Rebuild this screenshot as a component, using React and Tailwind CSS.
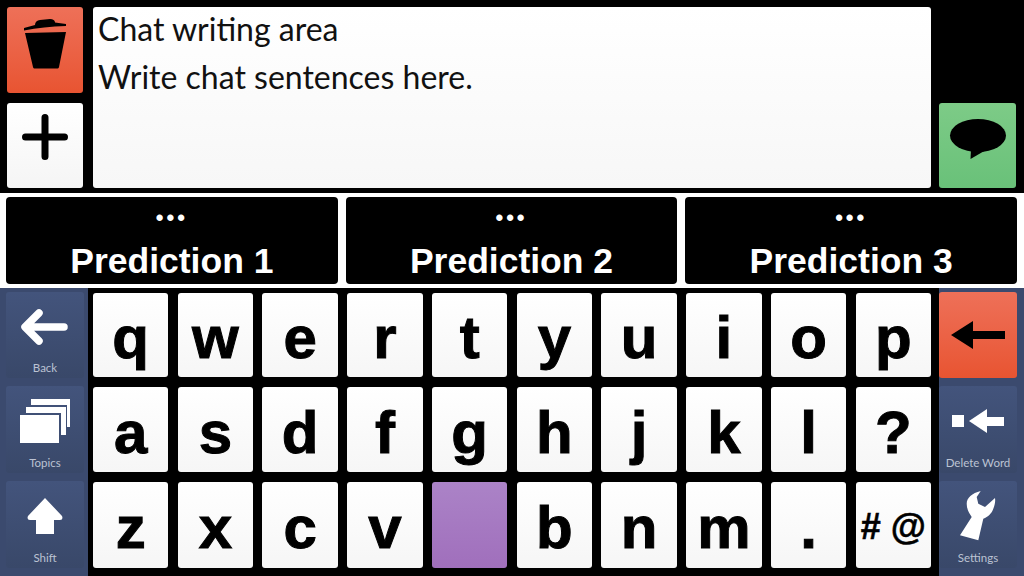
import React from 'react'

const ROWS = [
  ['q', 'w', 'e', 'r', 't', 'y', 'u', 'i', 'o', 'p'],
  ['a', 's', 'd', 'f', 'g', 'h', 'j', 'k', 'l', '?'],
  ['z', 'x', 'c', 'v', '', 'b', 'n', 'm', '.', '#@'],
]

const ROUND_TEXT = 'font-["Liberation_Sans",Arial,sans-serif]'

function TrashIcon() {
  return (
    <svg width="44" height="51" viewBox="0 0 44 51">
      <path d="M1 10 L12 7 C12 4 14 2.5 17 2 L27 1 C30 1 32 2.5 32 4.5 L43 6 L43 8 C28 8.5 14 10 1 12.5 Z" fill="#000" />
      <path d="M2 15 L43 14 L36 49 C35.8 50 35 50.5 34 50.5 L12 50.5 C11 50.5 10.2 50 10 49 Z" fill="#000" />
    </svg>
  )
}

function PlusIcon() {
  return (
    <svg width="46" height="46" viewBox="0 0 46 46">
      <path d="M23 3.5 V42.5 M3.5 23 H42.5" stroke="#000" strokeWidth="7" strokeLinecap="round" />
    </svg>
  )
}

function BubbleIcon() {
  return (
    <svg width="58" height="41" viewBox="0 0 58 41">
      <ellipse cx="29" cy="16.5" rx="28" ry="16.5" fill="#000" />
      <path d="M22 30 L21.5 40 L37 31 Z" fill="#000" />
    </svg>
  )
}

function BackIcon() {
  return (
    <svg width="48" height="36" viewBox="0 0 48 36">
      <path d="M18 4 L4 18 L18 32 M5 18 H43" fill="none" stroke="#fff" strokeWidth="7.5" strokeLinecap="round" strokeLinejoin="round" />
    </svg>
  )
}

function TopicsIcon() {
  return (
    <svg width="50" height="44" viewBox="0 0 50 44">
      <path d="M11 0 H50 V28 H47 V6 H11 Z" fill="#fff" />
      <path d="M6 8 H46 V36 H41 V14 H6 Z" fill="#fff" />
      <rect x="0" y="16" width="39" height="28" fill="#fff" />
    </svg>
  )
}

function ShiftIcon() {
  return (
    <svg width="38" height="38" viewBox="0 0 38 38">
      <path d="M19 1 L36 19 Q37.5 23 34 23 L28 23 L28 37 L10 37 L10 23 L4 23 Q0.5 23 2 19 Z" fill="#fff" />
    </svg>
  )
}

function DeleteArrowIcon() {
  return (
    <svg width="54" height="28" viewBox="0 0 54 28">
      <path d="M22 0 L22 10 L54 10 L54 18 L22 18 L22 28 L0 14 Z" fill="#000" />
    </svg>
  )
}

function DeleteWordIcon() {
  return (
    <svg width="52" height="24" viewBox="0 0 52 24">
      <rect x="0" y="6" width="12" height="12" fill="#fff" />
      <path d="M35 0 V8 H52 V17 H35 V24 L17 12 Z" fill="#fff" />
    </svg>
  )
}

function WrenchIcon() {
  return (
    <svg width="36" height="50" viewBox="0 0 36 50">
      <path d="M20.7 0 C12 2 6.7 7 6.7 12.7 C6.7 18 9 22 11.7 26 L0 44.3 L18.3 49.3 L23.3 27.7 C28 26 32 22 33.3 17.7 C35 14 35.5 10 35 7 L25 16 L18.3 12.7 L16.7 6 Z" fill="#fff" />
    </svg>
  )
}

function SideButton({ label, icon, className }) {
  return (
    <div className={`w-[78px] rounded-[3px] bg-gradient-to-b from-[#43547c] to-[#394869] flex flex-col items-center pb-[3px] ${className}`}>
      <div className="flex-1 flex items-center justify-center">{icon}</div>
      <span className='text-[11.5px] leading-[14px] text-[#bcc3d3] font-["Lato",sans-serif]'>{label}</span>
    </div>
  )
}

function Key({ value }) {
  if (value === '') {
    return <div className="rounded-[3px] bg-gradient-to-b from-[#ab83c7] to-[#a06fbc]" />
  }
  if (value === '#@') {
    return (
      <div className={`rounded-[3px] bg-gradient-to-b from-white to-[#f6f6f6] flex items-center justify-center gap-[10px] pt-[3px] ${ROUND_TEXT} text-black [-webkit-text-stroke:0.5px_black]`}>
        <span className="text-[36px] font-bold leading-none">#</span>
        <span className="text-[36px] font-bold leading-none">@</span>
      </div>
    )
  }
  return (
    <div className={`rounded-[3px] bg-gradient-to-b from-white to-[#f6f6f6] flex items-center justify-center pt-[6px] ${ROUND_TEXT} text-[60px] font-bold leading-none text-black [-webkit-text-stroke:1px_black]`}>
      {value}
    </div>
  )
}

function Prediction({ label }) {
  return (
    <div className={`flex-1 rounded-[4px] bg-black text-white flex flex-col items-center ${ROUND_TEXT} font-bold`}>
      <span className="text-[22px] leading-[14px] mt-[14px] tracking-[3px]">•••</span>
      <span className="text-[35.5px] leading-[38px] mt-[17px]">{label}</span>
    </div>
  )
}

export default function App() {
  return (
    <div className="w-[1024px] h-[576px] bg-black flex flex-col overflow-hidden">
      {/* Chat area */}
      <div className="h-[193px] flex pt-[7px] pl-[7px] pr-[7px]">
        <div className="w-[76px] flex flex-col gap-[10px]">
          <div className="h-[86px] rounded-[3px] bg-gradient-to-b from-[#ee7058] to-[#e85431] flex justify-center pt-[11px]">
            <TrashIcon />
          </div>
          <div className="h-[85px] rounded-[3px] bg-gradient-to-b from-white to-[#f5f5f5] flex justify-center pt-[11px]">
            <PlusIcon />
          </div>
        </div>
        <div className='w-[838px] h-[181px] ml-[10px] rounded-[3px] bg-gradient-to-b from-white to-[#f7f7f7] px-[5px] text-[32px] leading-[48px] text-[#111] font-["Lato",sans-serif]'>
          <p className="-mt-[2px]">Chat writing area</p>
          <p>Write chat sentences here.</p>
        </div>
        <div className="w-[77px] h-[85px] ml-[8px] mt-[96px] rounded-[3px] bg-gradient-to-b from-[#7dcb87] to-[#69c179] flex justify-center pt-[16px]">
          <BubbleIcon />
        </div>
      </div>

      {/* Predictions */}
      <div className="h-[95px] bg-white flex gap-[8px] pl-[6px] pr-[7px] pt-[4px] pb-[4px]">
        <Prediction label="Prediction 1" />
        <Prediction label="Prediction 2" />
        <Prediction label="Prediction 3" />
      </div>

      {/* Keyboard */}
      <div className="flex-1 flex">
        <div className="w-[88px] bg-[#3b4a6e] flex flex-col gap-[8px] pl-[6px] pt-[4px]">
          <SideButton label="Back" icon={<BackIcon />} className="h-[86px]" />
          <SideButton label="Topics" icon={<TopicsIcon />} className="h-[87px]" />
          <SideButton label="Shift" icon={<ShiftIcon />} className="h-[87px]" />
        </div>
        <div className="w-[851px] pl-[5px] pr-[8px] pt-[5px] grid grid-cols-10 grid-rows-[84px_85px_86px] gap-x-[9.4px] gap-y-[10px]">
          {ROWS.flat().map((k, i) => (
            <Key key={i} value={k} />
          ))}
        </div>
        <div className="flex-1 bg-[#3b4a6e] flex flex-col gap-[8px] pt-[4px]">
          <div className="w-[78px] h-[86px] rounded-[3px] bg-gradient-to-b from-[#ee7058] to-[#e85431] flex items-center justify-center">
            <DeleteArrowIcon />
          </div>
          <SideButton label="Delete Word" icon={<DeleteWordIcon />} className="h-[87px]" />
          <SideButton label="Settings" icon={<WrenchIcon />} className="h-[87px]" />
        </div>
      </div>
    </div>
  )
}
